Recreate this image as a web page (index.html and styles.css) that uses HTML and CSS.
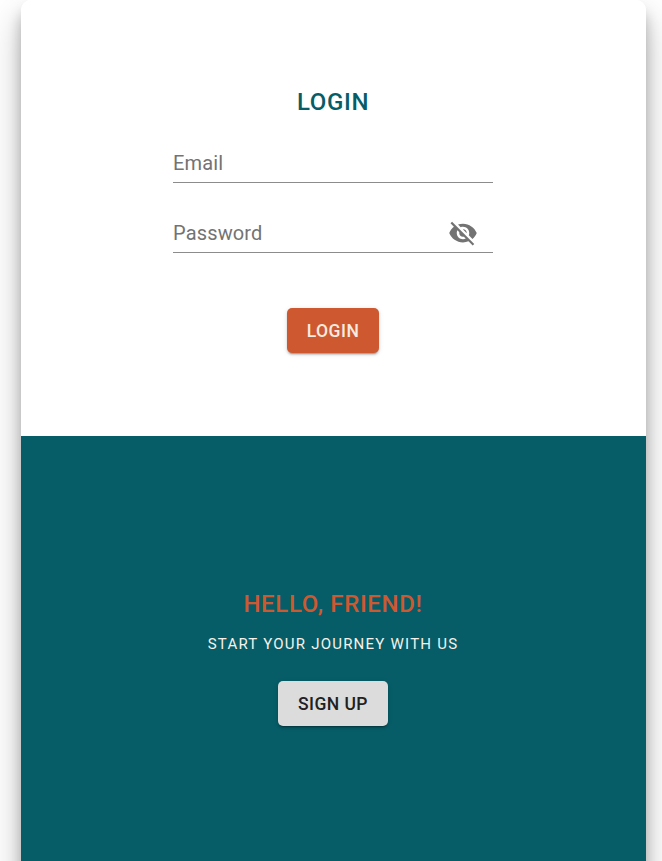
FILE: index.html
```html
<!DOCTYPE html>
<html lang="en">
<head>
<meta charset="utf-8">
<title>Login</title>
<link rel="stylesheet" href="styles.css">
</head>
<body>
<main class="card">
  <section class="panel login">
    <h1 class="title">LOGIN</h1>
    <form class="form">
      <div class="field"><span class="label">Email</span></div>
      <div class="field password">
        <span class="label">Password</span>
        <svg class="eye" viewBox="0 0 24 24"><path d="M12 7c2.76 0 5 2.24 5 5 0 .65-.13 1.26-.36 1.83l2.92 2.92c1.51-1.26 2.7-2.89 3.43-4.75-1.73-4.39-6-7.5-11-7.5-1.4 0-2.74.25-3.98.7l2.16 2.16C10.74 7.13 11.35 7 12 7zM2 4.27l2.28 2.28.46.46C3.08 8.3 1.78 10.02 1 12c1.73 4.39 6 7.5 11 7.5 1.55 0 3.03-.3 4.38-.84l.42.42L19.73 22 21 20.73 3.27 3 2 4.27zM7.53 9.8l1.55 1.55c-.05.21-.08.43-.08.65 0 1.66 1.34 3 3 3 .22 0 .44-.03.65-.08l1.55 1.55c-.67.33-1.41.53-2.2.53-2.76 0-5-2.24-5-5 0-.79.2-1.53.53-2.2zm4.31-.78l3.15 3.15.02-.16c0-1.66-1.34-3-3-3l-.17.01z"/></svg>
      </div>
      <button class="button primary" type="button">LOGIN</button>
    </form>
  </section>
  <section class="panel signup">
    <h2 class="title greeting">HELLO, FRIEND!</h2>
    <p class="tagline">START YOUR JOURNEY WITH US</p>
    <button class="button secondary" type="button">SIGN UP</button>
  </section>
</main>
</body>
</html>
```

FILE: styles.css
```css
* { box-sizing: border-box; }
html { height: 861px; overflow: hidden; }
body { margin: 0; height: 861px; overflow: hidden; background: #fff; font-family: Roboto, sans-serif; }
.card { width: 625px; height: 900px; margin: 0 0 0 21px; border-radius: 10px; overflow: hidden; box-shadow: 0 17.5px 35px rgba(0,0,0,.25), 0 12.5px 12.5px rgba(0,0,0,.22); }
.panel { height: 436px; display: flex; flex-direction: column; align-items: center; padding-right: 1px; }
.login { background: #fff; padding-top: 86px; }
.signup { height: 464px; background: #065d67; padding-top: 152px; }
.title { margin: 0; font-size: 24px; line-height: 32px; font-weight: 500; letter-spacing: .65px; color: #065d67; }
.form { width: 320px; display: flex; flex-direction: column; align-items: center; padding-top: 25px; }
.field { width: 320px; height: 40px; border-bottom: 1px solid #8c8c8c; display: flex; align-items: center; justify-content: space-between; color: #737373; }
.password { margin-top: 30px; padding-right: 15px; }
.label { font-size: 20px; line-height: 24px; letter-spacing: .15px; }
.eye { width: 30px; height: 30px; fill: #737373; }
.button { height: 45px; border: 0; border-radius: 5px; padding: 0; font: 500 17.5px Roboto, sans-serif; letter-spacing: .45px; box-shadow: 0 3px 1px -2px rgba(0,0,0,.2), 0 2px 2px rgba(0,0,0,.14), 0 1px 5px rgba(0,0,0,.12); }
.primary { width: 92px; margin-top: 55px; background: #ce5930; color: #f5ebe3; }
.secondary { width: 110px; margin-top: 27px; background: #dcdcdc; color: #212121; }
.greeting { color: #ce5930; }
.tagline { margin: 14px 0 0; font-size: 15px; line-height: 20px; letter-spacing: 1.23px; color: #f7f1ea; }
```
